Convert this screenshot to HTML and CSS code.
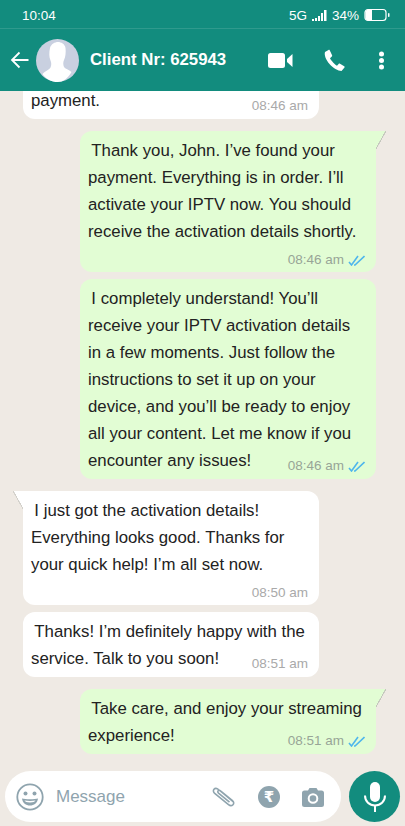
FILE: index.html

```html
<!DOCTYPE html>
<html lang="en">
<head>
    <meta charset="UTF-8">
    <meta name="viewport" content="width=device-width, initial-scale=1.0">
    <title>Client Nr: 625943</title>
    <link rel="stylesheet" href="styles.css">
</head>
<body>
<div class="phone">

    <!-- Status bar -->
    <div class="status-bar">
        <span>10:04</span>
        <div class="status-right">
            <span>5G</span>
            <svg class="signal" width="15" height="13" viewBox="0 0 15 13">
                <path d="M0 10h2v2H0zM3 9h2v3H3zM6 7h2v5H6zM9 4h2v8H9zM12 1h2.500v11H12z" fill="#fff"/>
            </svg>
            <span>34%</span>
            <svg class="battery" width="26" height="14" viewBox="0 0 26 14">
                <rect x="1" y="1.500" width="21" height="11" rx="3" fill="none" stroke="#fff" stroke-width="1.200"/>
                <path d="M1.500 4.500a3 3 0 0 1 3-3H8v11H4.500a3 3 0 0 1-3-3z" fill="#fff"/>
                <rect x="24" y="5" width="1.500" height="4" rx=".7" fill="#fff"/>
            </svg>
        </div>
    </div>

    <!-- Header -->
    <header class="chat-header">
        <svg class="back" width="19" height="18" viewBox="0 0 19 18">
            <path d="M18.500 9H2M9.500 1.500 2 9l7.500 7.500" fill="none" stroke="#fff" stroke-width="1.800"/>
        </svg>
        <svg class="avatar" width="43" height="43" viewBox="0 0 43 43">
            <circle cx="21.500" cy="21.500" r="21.500" fill="#c9d0e0"/>
            <path d="M14 9c1-4 5-6 8-6s7 2 7.500 6c.5 4 0 9-1.500 12-1 2-1 5 0 7 1 1.500 5 3 7.500 5C31.500 40 26.500 43 21.500 43S10 40.500 6.500 35c2.500-3 7-4.500 8-6.500 1-2 1-5 0-7-1.500-3-1.500-8.500-.5-12.500z" fill="#fff"/>
        </svg>
        <h1 class="chat-name">Client Nr: 625943</h1>
        <div class="header-icons">
            <svg width="25" height="17" viewBox="0 0 25 17">
                <rect x="0" y="1" width="17" height="15" rx="2.500" fill="#fff"/>
                <path d="M19 7 24.500 2v13L19 10z" fill="#fff"/>
            </svg>
            <svg width="25" height="23" viewBox="0 0 25 23">
                <path d="M5.500 1 2 3c-1 3 1 8 4.500 12s8.500 7 12 7l3-3.500c.300-.5.200-1-.3-1.300l-4.200-2.500c-.5-.3-1-.2-1.400.2l-1.600 1.800c-2-1-6-5.200-7-7.500l1.800-1.600c.4-.4.500-.9.300-1.400L6.700 1.200C6.400.8 5.900.8 5.500 1z" fill="#fff"/>
            </svg>
            <svg width="7" height="19" viewBox="0 0 7 19">
                <circle cx="3.500" cy="3" r="2.500" fill="#fff"/>
                <circle cx="3.500" cy="9.500" r="2.500" fill="#fff"/>
                <circle cx="3.500" cy="16" r="2.500" fill="#fff"/>
            </svg>
        </div>
    </header>

    <!-- Messages -->
    <main class="messages">
        <div class="bubble received">
            payment.
            <span class="time">08:46 am</span>
        </div>

        <div class="bubble sent tail">
            &#8201;Thank you, John. I’ve found your payment. Everything is in order. I’ll activate your IPTV now. You should receive the activation details shortly.
            <span class="time time-below">08:46 am <svg class="ticks" width="18" height="11" viewBox="0 0 18 11"><path d="M2 7l2.500 3L11 1M7 10 8 10 17.500 1" fill="none" stroke="#4fb6ec" stroke-width="1.600"/></svg></span>
        </div>

        <div class="bubble sent">
            &#8201;I completely understand! You’ll receive your IPTV activation details in a few moments. Just follow the instructions to set it up on your device, and you’ll be ready to enjoy all your content. Let me know if you encounter any issues!
            <span class="time">08:46 am <svg class="ticks" width="18" height="11" viewBox="0 0 18 11"><path d="M2 7l2.500 3L11 1M7 10 8 10 17.500 1" fill="none" stroke="#4fb6ec" stroke-width="1.600"/></svg></span>
        </div>

        <div class="bubble received tail">
            &#8201;I just got the activation details! Everything looks good. Thanks for your quick help! I’m all set now.
            <span class="time time-below">08:50 am</span>
        </div>

        <div class="bubble received">
            &#8201;Thanks! I’m definitely happy with the service. Talk to you soon!
            <span class="time">08:51 am</span>
        </div>

        <div class="bubble sent tail">
            &#8201;Take care, and enjoy your streaming experience!
            <span class="time">08:51 am <svg class="ticks" width="18" height="11" viewBox="0 0 18 11"><path d="M2 7l2.500 3L11 1M7 10 8 10 17.500 1" fill="none" stroke="#4fb6ec" stroke-width="1.600"/></svg></span>
        </div>
    </main>

    <!-- Input -->
    <footer class="composer">
        <div class="input-pill">
            <svg class="emoji" width="28" height="28" viewBox="0 0 28 28">
                <circle cx="14" cy="14" r="12.700" fill="none" stroke="#8fa4ae" stroke-width="1.800"/>
                <circle cx="9.500" cy="10.500" r="2" fill="#8fa4ae"/>
                <circle cx="18.500" cy="10.500" r="2" fill="#8fa4ae"/>
                <path d="M6 15.500c3 1 13 1 16 0-.5 4.500-4 7-8 7s-7.500-2.500-8-7z" fill="#8fa4ae"/>
                <path d="M8.500 17.500c3 .5 8 .5 11 0-.5 1-2.500 2-5.500 2s-5-1-5.500-2z" fill="#fff"/>
            </svg>
            <span class="placeholder">Message</span>
            <div class="input-icons">
                <svg width="24" height="22" viewBox="0 0 24 22">
                    <path d="M22 17.500 6.500 4.500C4.800 3 3 3 2 4.200S1.200 7.200 3 8.700l13.500 11c1.500 1.200 3.300 1.200 4.500 0s.8-3-.8-4.300L8.500 5.800c-.8-.7-1.800-.7-2.400 0s-.4 1.600.4 2.300l11 9" fill="none" stroke="#8fa4ae" stroke-width="1.600" transform="translate(0 -1)"/>
                </svg>
                <div class="rupee"><span>₹</span></div>
                <svg width="22" height="20" viewBox="0 0 22 20">
                    <path d="M2.500 3.500H6L7.500 1h7L16 3.500h3.500A2.500 2.500 0 0 1 22 6v11.500a2.500 2.500 0 0 1-2.500 2.500h-17A2.500 2.500 0 0 1 0 17.500V6a2.500 2.500 0 0 1 2.500-2.500z" fill="#8fa4ae"/>
                    <circle cx="11" cy="11.500" r="4.300" fill="none" stroke="#fff" stroke-width="2"/>
                </svg>
            </div>
        </div>
        <div class="mic-button">
            <svg width="24" height="30" viewBox="0 0 24 30">
                <rect x="7" y="0" width="10" height="20" rx="5" fill="#fff"/>
                <path d="M2 13.500c0 6 4.500 10 10 10s10-4 10-10" fill="none" stroke="#fff" stroke-width="2"/>
                <path d="M12 23v7" stroke="#fff" stroke-width="2"/>
            </svg>
        </div>
    </footer>

</div>
</body>
</html>
```

FILE: styles.css

```css
* {
    box-sizing: border-box;
}

body {
    margin: 0;
    font-family: "Liberation Sans", Arial, sans-serif;
    background-color: #efeae4;
}

.phone {
    display: flex;
    flex-direction: column;
    height: 826px;
    overflow: hidden;
    background-color: #efeae4;
}

.status-bar {
    display: flex;
    justify-content: space-between;
    align-items: center;
    flex-shrink: 0;
    height: 29px;
    padding: 2px 15px 0 22px;
    background-color: #128c7e;
    border-bottom: 1px solid #2f9a8d;
    color: #fff;
    font-size: 13.500px;
}

.status-right {
    display: flex;
    align-items: center;
    gap: 5px;
}

.chat-header {
    display: flex;
    align-items: center;
    flex-shrink: 0;
    height: 62px;
    padding-left: 10px;
    background-color: #128c7e;
    position: relative;
    z-index: 1;
}

.avatar {
    margin-left: 7px;
}

.chat-name {
    margin: 0 0 0 11px;
    color: #fff;
    font-size: 16.800px;
    font-weight: bold;
}

.header-icons {
    display: flex;
    align-items: center;
    gap: 30px;
    margin-left: auto;
    padding-right: 20px;
}

.messages {
    display: flex;
    flex-direction: column;
    justify-content: flex-end;
    flex: 1;
    min-height: 0;
    padding-bottom: 17px;
}

.bubble {
    display: flow-root;
    flex-shrink: 0;
    position: relative;
    width: 296px;
    margin-top: 7px;
    padding: 6px 11px 0 8px;
    border-radius: 12px;
    color: #222;
    font-size: 16.800px;
    line-height: 27px;
}

.received {
    margin-left: 23px;
    background-color: #fff;
}

.sent {
    margin-left: 80px;
    background-color: #e2fdd4;
}

.tail {
    margin-top: 12px;
}

.tail::before {
    content: "";
    position: absolute;
    top: 0;
    width: 10px;
    height: 18px;
}

.sent.tail {
    border-top-right-radius: 0;
}

.sent.tail::before {
    right: -10px;
    background: linear-gradient(to bottom right, #e2fdd4 46%, #c4c8bd 47%, #c4c8bd 52%, transparent 53%);
}

.received.tail {
    border-top-left-radius: 0;
}

.received.tail::before {
    left: -10px;
    background: linear-gradient(to bottom left, #fff 46%, #d2d0ca 47%, #d2d0ca 52%, transparent 53%);
}

.time {
    float: right;
    display: flex;
    align-items: center;
    gap: 3px;
    height: 16px;
    margin-top: 11px;
    margin-bottom: 5px;
    color: #a9a9a9;
    font-size: 13.500px;
    line-height: 16px;
}

.sent .time {
    color: #98a597;
}

.time-below {
    margin-top: 7px;
    margin-bottom: 4px;
}

.composer {
    display: flex;
    gap: 8px;
    flex-shrink: 0;
    padding: 0 5px 4px;
}

.input-pill {
    display: flex;
    align-items: center;
    flex: 1;
    height: 51px;
    padding: 0 17px 0 11px;
    background-color: #fff;
    border-radius: 26px;
}

.placeholder {
    margin-left: 12px;
    color: #8fa4ae;
    font-size: 17px;
}

.input-icons {
    display: flex;
    align-items: center;
    gap: 22px;
    margin-left: auto;
}

.rupee {
    display: flex;
    align-items: center;
    justify-content: center;
    width: 22px;
    height: 22px;
    border-radius: 50%;
    background-color: #8fa4ae;
    color: #fff;
    font-family: "DejaVu Sans", sans-serif;
    font-size: 15px;
    font-weight: bold;
}

.mic-button {
    display: flex;
    align-items: center;
    justify-content: center;
    width: 51px;
    height: 51px;
    border-radius: 50%;
    background-color: #128c7e;
}
```
